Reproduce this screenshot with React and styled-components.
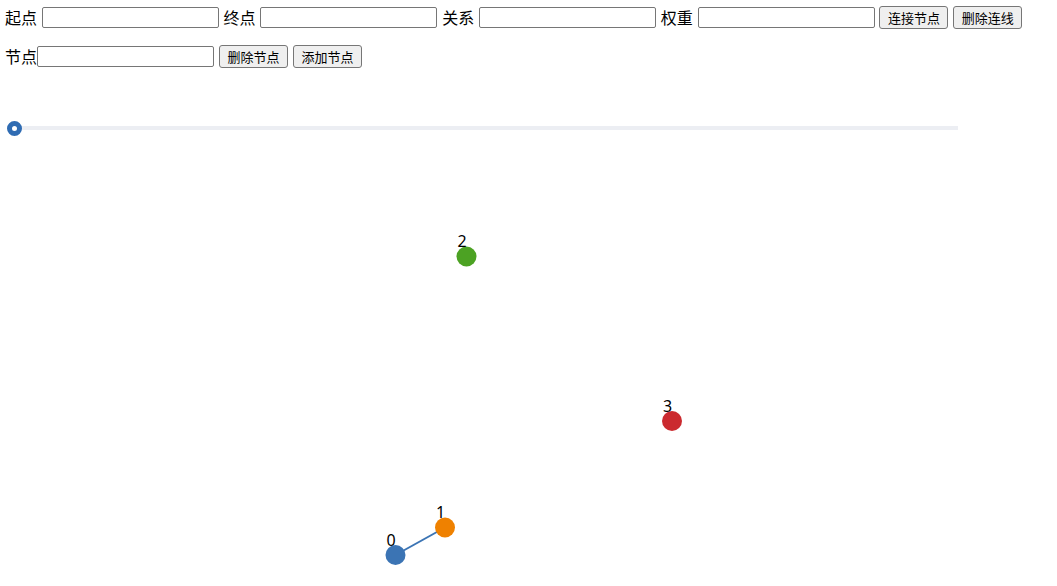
import React from 'react';
import styled, { createGlobalStyle } from 'styled-components';

const GlobalStyle = createGlobalStyle`
	body {
		margin: 0;
		background: #fff;
		font-family: 'Noto Sans CJK SC', 'Noto Sans', sans-serif;
		font-size: 16px;
		color: #000;
	}
`;

const Page = styled.div`
	padding: 6px 5px 0;
	width: 1057px;
	box-sizing: border-box;
`;

const Row = styled.div`
	display: flex;
	align-items: center;
	gap: ${(p) => p.gap || 0}px;
	height: 23px;
	margin-bottom: ${(p) => p.below || 0}px;
`;

const Label = styled.span`
	font-size: 16px;
	line-height: 23px;
	white-space: nowrap;
`;

const Field = styled.input`
	box-sizing: border-box;
	width: 177px;
	height: 21px;
	margin: 0;
	margin-left: ${(p) => p.pull || 0}px;
	padding: 1px 2px;
	border: 1px solid #767676;
	border-radius: 2px;
	background: #fff;
	font-size: 13px;
`;

const Button = styled.button`
	box-sizing: border-box;
	width: 69px;
	height: 23px;
	margin: 0;
	padding: 0 6px;
	border: 1px solid #767676;
	border-radius: 3px;
	background: #efefef;
	color: #000;
	font-family: 'Noto Sans CJK SC', sans-serif;
	font-size: 13px;
	line-height: 19px;
	white-space: nowrap;
`;

const SliderBox = styled.div`
	margin: 52px 0 0 2px;
	width: 951px;
	height: 16px;
	display: flex;
	align-items: center;
	position: relative;
`;

const Track = styled.div`
	flex: 1;
	height: 4px;
	margin-left: 7px;
	background: #eceef3;
`;

const Thumb = styled.div`
	position: absolute;
	left: 0;
	top: 0.5px;
	width: 15px;
	height: 15px;
	box-sizing: border-box;
	border-radius: 50%;
	border: 5px solid #2f6cb3;
	background: #fff;
`;

const Graph = styled.svg`
	display: block;
	margin-top: 14px;
	margin-left: -5px;
`;

const nodes = [
	{ id: 0, x: 395.5, y: 405, color: '#3b74b4' },
	{ id: 1, x: 445, y: 377.5, color: '#ef8100' },
	{ id: 2, x: 466.5, y: 106.5, color: '#4ca223' },
	{ id: 3, x: 672, y: 271, color: '#cb2a2f' },
];

const links = [{ source: 0, target: 1 }];

const App = () => {
	return (
		<>
			<GlobalStyle />
			<Page>
				<Row gap={4.8} below={16}>
					<Label>起点</Label>
					<Field type='text' />
					<Label>终点</Label>
					<Field type='text' />
					<Label>关系</Label>
					<Field type='text' />
					<Label>权重</Label>
					<Field type='text' />
					<Button>连接节点</Button>
					<Button>删除连线</Button>
				</Row>
				<Row gap={5}>
					<Label>节点</Label>
					<Field type='text' pull={-5} />
					<Button>删除节点</Button>
					<Button>添加节点</Button>
				</Row>
				<SliderBox>
					<Track />
					<Thumb />
				</SliderBox>
				<Graph width='1057' height='436'>
					{links.map((l, i) => (
						<line
							key={i}
							x1={nodes[l.source].x}
							y1={nodes[l.source].y}
							x2={nodes[l.target].x}
							y2={nodes[l.target].y}
							stroke='#3b74b4'
							strokeWidth='2'
						/>
					))}
					{nodes.map((n) => (
						<g key={n.id}>
							<circle cx={n.x} cy={n.y} r='10' fill={n.color} />
							<text
								x={n.x - 9}
								y={n.y - 9.5}
								fontSize='16'
								fontFamily="'Noto Sans', sans-serif"
								fill='#000'
							>
								{n.id}
							</text>
						</g>
					))}
				</Graph>
			</Page>
		</>
	);
};

export default App;
